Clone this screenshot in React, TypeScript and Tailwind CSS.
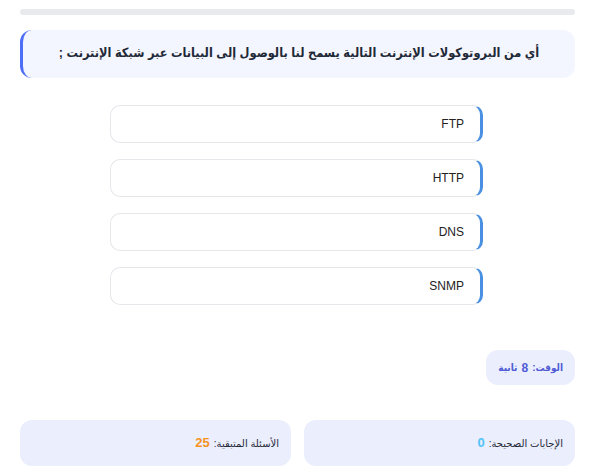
import React from 'react';

const options = ['FTP', 'HTTP', 'DNS', 'SNMP'];

function StatBox({ label, value, valueClass }: { label: string; value: number; valueClass: string }) {
    return (
        <div className="flex h-[46px] items-center rounded-xl bg-[#ebeefd] px-3">
            <span className="text-[10px] text-[#1f2937]">{label}: </span>
            <span className={`mr-1 text-[13px] font-bold ${valueClass}`}>{value}</span>
        </div>
    );
}

export default function App() {
    return (
        <div
            dir="rtl"
            className="min-h-[476px] w-[592px] bg-white pt-[9px] pr-[17px] pl-[20px] font-['Liberation_Sans','DejaVu_Sans',sans-serif]"
        >
            {/* Progress */}
            <div className="h-[6px] w-full rounded-full bg-[#e8eaed]" />

            {/* Question */}
            <div className="mt-[15px] flex h-[48px] items-center justify-center rounded-xl border-l-[3px] border-[#4f6ef7] bg-[#f3f6fe] px-5">
                <h2 className="whitespace-nowrap font-['Liberation_Sans','DejaVu_Sans_Condensed',sans-serif] text-[12.7px] font-bold text-[#1f2937]">
                    أي من البروتوكولات الإنترنت التالية يسمح لنا بالوصول إلى البيانات عبر شبكة الإنترنت ;
                </h2>
            </div>

            {/* Options */}
            <div className="mt-[27px] flex flex-col gap-4 pr-[92px]">
                {options.map((opt) => (
                    <button
                        key={opt}
                        className="flex h-[38px] w-[373px] items-center rounded-[10px] border border-r-[3px] border-[#e5e7eb] border-r-[#4a90e2] bg-white px-4 text-right text-[12px] text-[#222]"
                    >
                        {opt}
                    </button>
                ))}
            </div>

            {/* Timer */}
            <div className="mt-[45px] flex">
                <div className="flex h-[35px] items-center rounded-xl bg-[#ebeefd] px-3 font-['Liberation_Sans','DejaVu_Sans_Condensed',sans-serif] text-[10px] font-bold text-[#4f5bd5]">
                    الوقت: <span className="mx-1 text-[12px]">8</span> ثانية
                </div>
            </div>

            {/* Stats */}
            <div className="mt-[35px] grid grid-cols-2 gap-[13px]">
                <StatBox label="الإجابات الصحيحة" value={0} valueClass="text-[#4fc3f7]" />
                <StatBox label="الأسئلة المتبقية" value={25} valueClass="text-[#f7931e]" />
            </div>
        </div>
    );
}
